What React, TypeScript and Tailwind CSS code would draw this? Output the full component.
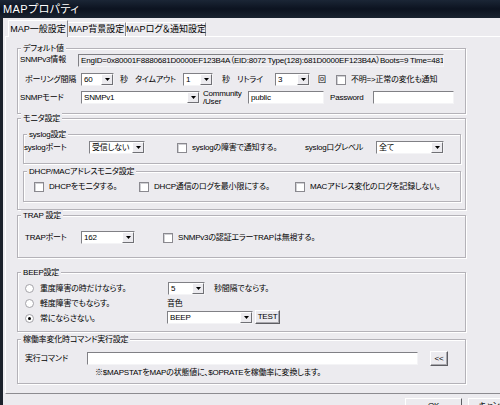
import React from "react";

const BG = "bg-[#ecebef]";

function Combo({ w, value }: { w: string; value: string }) {
  return (
    <div
      className={`${w} h-[13px] shrink-0 flex bg-white border border-t-[#808085] border-l-[#808085] border-b-[#f4f4f6] border-r-[#f4f4f6]`}
    >
      <span className="flex-1 pl-[2px] leading-[11px] overflow-hidden">{value}</span>
      <span className="w-[12px] self-stretch flex items-center justify-center bg-[#ecebef] border border-t-white border-l-white border-b-[#707075] border-r-[#707075]">
        <svg width="5" height="3" viewBox="0 0 5 3">
          <path d="M0 0h5L2.5 3z" fill="#000" />
        </svg>
      </span>
    </div>
  );
}

function TextBox({ w, value, ro }: { w: string; value?: string; ro?: boolean }) {
  return (
    <div
      className={`${w} h-[13px] shrink-0 ${ro ? BG : "bg-white"} border border-t-[#808085] border-l-[#808085] border-b-[#f4f4f6] border-r-[#f4f4f6] pl-[2px] leading-[11px] overflow-hidden`}
    >
      {value}
    </div>
  );
}

function Check({ label, className = "" }: { label: string; className?: string }) {
  return (
    <div className={`flex items-center shrink-0 ${className}`}>
      <span className="w-[10px] h-[10px] shrink-0 bg-white border border-[#8a898f] shadow-[inset_1px_1px_0_#d0d0d4]" />
      <span className="ml-[5px]">{label}</span>
    </div>
  );
}

function Radio({ label, checked }: { label: string; checked?: boolean }) {
  return (
    <div className="flex items-center h-[13px]">
      <span className="w-[9px] h-[9px] rounded-full bg-white border border-[#a3a2a8] flex items-center justify-center">
        {checked && <span className="w-[3px] h-[3px] rounded-full bg-black" />}
      </span>
      <span className="ml-[6px]">{label}</span>
    </div>
  );
}

function Group({
  title,
  className,
  children,
}: {
  title: string;
  className: string;
  children?: React.ReactNode;
}) {
  return (
    <div
      className={`relative shrink-0 border border-[#b4b2b8] shadow-[inset_1px_1px_0_#fff,1px_1px_0_#fff] ${className}`}
    >
      <span className={`absolute -top-[6px] left-[3px] px-[2px] leading-[11px] ${BG}`}>{title}</span>
      {children}
    </div>
  );
}

export default function App() {
  return (
    <div
      className={`w-[500px] h-[405px] overflow-hidden whitespace-nowrap ${BG} text-black text-[8px] tracking-[-0.2px] leading-none font-['Liberation_Sans','Noto_Sans_CJK_JP',sans-serif] [font-feature-settings:'palt'] flex flex-col`}
    >
      {/* title bar */}
      <div className="h-[18px] shrink-0 bg-gradient-to-b from-[#1b2636] via-[#0c1320] to-[#1a2330] flex items-center pl-[3px] text-white text-[11px] tracking-[0.4px]">
        MAPプロパティ
      </div>

      <div className="flex flex-1 min-h-0">
        <div className="w-[3px] shrink-0 bg-[#1c222c]" />
        <div className="flex-1 pl-[2px] flex flex-col">
          {/* tabs */}
          <div className="flex items-end h-[17px] mt-[2px] pl-[3px] relative z-10 text-[9px] tracking-normal">
            <div className={`h-[17px] w-[60px] -mb-[1px] ${BG} border border-b-0 border-l-white border-t-white border-r-[#8c8b90] flex items-center justify-center`}>
              MAP一般設定
            </div>
            <div className="h-[14px] w-[58px] border-t border-t-white border-r border-r-[#8c8b90] flex items-center justify-center">
              MAP背景設定
            </div>
            <div className="h-[14px] w-[80px] border-t border-t-white border-l border-l-white border-r border-r-[#8c8b90] flex items-center justify-center">
              MAPログ＆通知設定
            </div>
          </div>

          {/* tab panel */}
          <div className="w-[520px] h-[358px] shrink-0 border border-l-white border-t-white border-b-[#8c8b90] border-r-[#8c8b90] pl-[11px] flex flex-col">
            {/* デフォルト値 */}
            <Group title="デフォルト値" className="w-[449px] h-[66px] mt-[11px]">
              <div className="flex items-center h-[14px] mt-[4px]">
                <span className="w-[60px] pl-[2px] shrink-0">SNMPv3情報</span>
                <TextBox
                  w="w-[366px]"
                  ro
                  value="EngID=0x80001F8880681D0000EF123B4A（EID:8072 Type(128):681D0000EF123B4A）Boots=9  Time=4813"
                />
              </div>
              <div className="flex items-center h-[13px] mt-[6px]">
                <span className="w-[63px] pl-[7px] shrink-0">ポーリング間隔</span>
                <Combo w="w-[33px]" value="60" />
                <span className="w-[21px] pl-[6px] shrink-0">秒</span>
                <span className="w-[48px] shrink-0">タイムアウト</span>
                <Combo w="w-[30px]" value="1" />
                <span className="w-[24px] pl-[9px] shrink-0">秒</span>
                <span className="w-[38px] shrink-0">リトライ</span>
                <Combo w="w-[35px]" value="3" />
                <span className="w-[26px] pl-[8px] shrink-0">回</span>
                <Check label="不明=>正常の変化も通知" />
              </div>
              <div className="flex items-center h-[13px] mt-[5px]">
                <span className="w-[63px] pl-[2px] shrink-0">SNMPモード</span>
                <Combo w="w-[119px]" value="SNMPv1" />
                <span className="w-[48px] pl-[3px] shrink-0 leading-[8px]">
                  Community
                  <br />
                  /User
                </span>
                <TextBox w="w-[76px]" value="public" />
                <span className="w-[49px] pl-[6px] shrink-0">Password</span>
                <TextBox w="w-[81px]" />
              </div>
            </Group>

            {/* モニタ設定 */}
            <Group title="モニタ設定" className="w-[449px] h-[92px] mt-[4px] pl-[5px]">
              <Group title="syslog設定" className="w-[438px] h-[30px] mt-[15px]">
                <div className="flex items-center h-[13px] mt-[6px]">
                  <span className="w-[65px] shrink-0">syslogポート</span>
                  <Combo w="w-[56px]" value="受信しない" />
                  <span className="w-[32px] shrink-0" />
                  <Check label="syslogの障害で通知する。" className="w-[128px]" />
                  <span className="w-[71px] shrink-0">syslogログレベル</span>
                  <Combo w="w-[68px]" value="全て" />
                </div>
              </Group>
              <Group title="DHCP/MACアドレスモニタ設定" className="w-[438px] h-[31px] mt-[7px]">
                <div className="flex items-center h-[13px] mt-[8px] pl-[10px]">
                  <Check label="DHCPをモニタする。" className="w-[105px]" />
                  <Check label="DHCP通信のログを最小限にする。" className="w-[156px]" />
                  <Check label="MACアドレス変化のログを記録しない。" />
                </div>
              </Group>
            </Group>

            {/* TRAP 設定 */}
            <Group title="TRAP  設定" className="w-[449px] h-[43px] mt-[5px]">
              <div className="flex items-center h-[13px] mt-[15px]">
                <span className="w-[63px] pl-[7px] shrink-0">TRAPポート</span>
                <Combo w="w-[54px]" value="162" />
                <span className="w-[28px] shrink-0" />
                <Check label="SNMPv3の認証エラーTRAPは無視する。" />
              </div>
            </Group>

            {/* BEEP設定 */}
            <Group title="BEEP設定" className="w-[449px] h-[60px] mt-[14px]">
              <div className="flex mt-[9px]">
                <div className="w-[149px] pl-[7px] shrink-0 flex flex-col gap-[2px]">
                  <Radio label="重度障害の時だけならす。" />
                  <Radio label="軽度障害でもならす。" />
                  <Radio label="常にならさない。" checked />
                </div>
                <div className="flex flex-col">
                  <div className="flex items-center h-[13px] pl-[1px]">
                    <Combo w="w-[37px]" value="5" />
                    <span className="ml-[9px]">秒間隔でならす。</span>
                  </div>
                  <div className="h-[12px] mt-[3px] flex items-center">音色</div>
                  <div className="flex items-center">
                    <Combo w="w-[86px]" value="BEEP" />
                    <div className="ml-[2px] w-[25px] h-[14px] flex items-center justify-center bg-[#ecebef] border border-t-white border-l-white border-b-[#5e5e63] border-r-[#5e5e63] shadow-[inset_-1px_-1px_0_#a9a8ad]">
                      TEST
                    </div>
                  </div>
                </div>
              </div>
            </Group>

            {/* 稼働率変化時コマンド実行設定 */}
            <Group title="稼働率変化時コマンド実行設定" className="w-[449px] h-[45px] mt-[7px]">
              <div className="flex items-center h-[15px] mt-[11px]">
                <span className="w-[69px] pl-[7px] shrink-0">実行コマンド</span>
                <TextBox w="w-[331px]" />
                <div className="ml-[12px] w-[18px] h-[15px] flex items-center justify-center bg-[#ecebef] border border-t-white border-l-white border-b-[#5e5e63] border-r-[#5e5e63] shadow-[inset_-1px_-1px_0_#a9a8ad]">
                  &lt;&lt;
                </div>
              </div>
              <div className="pl-[77px] mt-[3px]">
                ※$MAPSTATをMAPの状態値に、$OPRATEを稼働率に変換します。
              </div>
            </Group>
          </div>

          {/* buttons */}
          <div className="flex pl-[400px] mt-[4px] gap-[6px]">
            <div className="w-[57px] h-[22px] shrink-0 flex items-start justify-center pt-[3px] bg-[#ecebef] border border-t-white border-l-white border-b-[#5e5e63] border-r-[#5e5e63]">
              OK
            </div>
            <div className="w-[57px] h-[22px] shrink-0 flex items-start justify-center pt-[3px] bg-[#ecebef] border border-t-white border-l-white border-b-[#5e5e63] border-r-[#5e5e63]">
              キャンセル
            </div>
          </div>
        </div>
      </div>
    </div>
  );
}
